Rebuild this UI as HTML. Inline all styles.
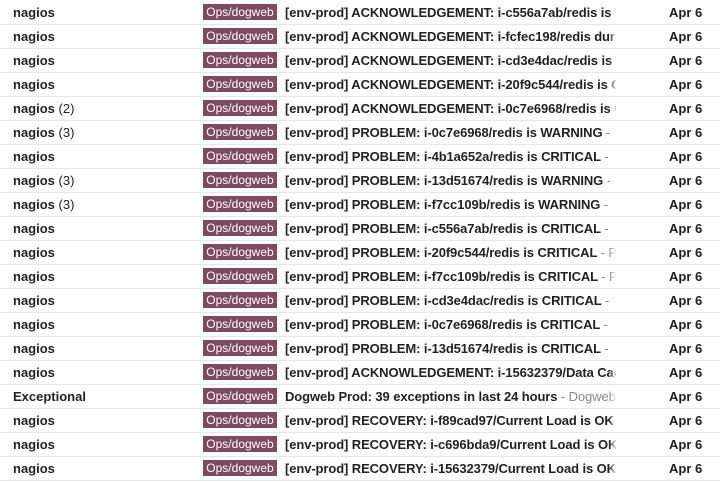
<!DOCTYPE html>
<html><head><meta charset="utf-8"><style>
body{margin:0;width:720px;height:482px;overflow:hidden;background:#fff;font-family:"Liberation Sans",Arial,sans-serif;font-size:13px;color:#222}
.wrap{position:absolute;top:1px;left:0;width:720px}
.row{position:relative;height:23px;border-bottom:1px solid #e6e6e6}
.from{position:absolute;left:13px;top:4px;font-weight:bold}
.from span{font-weight:normal}
.badge{position:absolute;left:203px;top:3px;width:74px;height:16px;background:#7d4a5e;color:#fff;font-size:12px;line-height:17px;text-align:center}
.subj{position:absolute;left:285px;top:4px;width:331px;overflow:hidden;white-space:nowrap;font-weight:bold;letter-spacing:-0.1px}
.subj i{font-style:normal;font-weight:normal;color:#888}
.fade{position:absolute;left:609px;top:0;width:8px;height:23px;background:linear-gradient(to right,rgba(255,255,255,0),#fff)}
.date{position:absolute;left:669px;top:4px;font-weight:bold}
</style></head><body><div class="wrap">
<div class="row"><div class="from">nagios</div><div class="badge">Ops/dogweb</div><div class="subj">[env-prod] ACKNOWLEDGEMENT: i-c556a7ab/redis is WARNING</div><div class="fade"></div><div class="date">Apr 6</div></div>
<div class="row"><div class="from">nagios</div><div class="badge">Ops/dogweb</div><div class="subj">[env-prod] ACKNOWLEDGEMENT: i-fcfec198/redis during</div><div class="fade"></div><div class="date">Apr 6</div></div>
<div class="row"><div class="from">nagios</div><div class="badge">Ops/dogweb</div><div class="subj">[env-prod] ACKNOWLEDGEMENT: i-cd3e4dac/redis is CRITICAL</div><div class="fade"></div><div class="date">Apr 6</div></div>
<div class="row"><div class="from">nagios</div><div class="badge">Ops/dogweb</div><div class="subj">[env-prod] ACKNOWLEDGEMENT: i-20f9c544/redis is CRITICAL</div><div class="fade"></div><div class="date">Apr 6</div></div>
<div class="row"><div class="from">nagios <span>(2)</span></div><div class="badge">Ops/dogweb</div><div class="subj">[env-prod] ACKNOWLEDGEMENT: i-0c7e6968/redis is CRITICAL</div><div class="fade"></div><div class="date">Apr 6</div></div>
<div class="row"><div class="from">nagios <span>(3)</span></div><div class="badge">Ops/dogweb</div><div class="subj">[env-prod] PROBLEM: i-0c7e6968/redis is WARNING <i>- </i></div><div class="fade"></div><div class="date">Apr 6</div></div>
<div class="row"><div class="from">nagios</div><div class="badge">Ops/dogweb</div><div class="subj">[env-prod] PROBLEM: i-4b1a652a/redis is CRITICAL <i>- </i></div><div class="fade"></div><div class="date">Apr 6</div></div>
<div class="row"><div class="from">nagios <span>(3)</span></div><div class="badge">Ops/dogweb</div><div class="subj">[env-prod] PROBLEM: i-13d51674/redis is WARNING <i>- </i></div><div class="fade"></div><div class="date">Apr 6</div></div>
<div class="row"><div class="from">nagios <span>(3)</span></div><div class="badge">Ops/dogweb</div><div class="subj">[env-prod] PROBLEM: i-f7cc109b/redis is WARNING <i>- </i></div><div class="fade"></div><div class="date">Apr 6</div></div>
<div class="row"><div class="from">nagios</div><div class="badge">Ops/dogweb</div><div class="subj">[env-prod] PROBLEM: i-c556a7ab/redis is CRITICAL <i>- </i></div><div class="fade"></div><div class="date">Apr 6</div></div>
<div class="row"><div class="from">nagios</div><div class="badge">Ops/dogweb</div><div class="subj">[env-prod] PROBLEM: i-20f9c544/redis is CRITICAL <i>- P</i></div><div class="fade"></div><div class="date">Apr 6</div></div>
<div class="row"><div class="from">nagios</div><div class="badge">Ops/dogweb</div><div class="subj">[env-prod] PROBLEM: i-f7cc109b/redis is CRITICAL <i>- P</i></div><div class="fade"></div><div class="date">Apr 6</div></div>
<div class="row"><div class="from">nagios</div><div class="badge">Ops/dogweb</div><div class="subj">[env-prod] PROBLEM: i-cd3e4dac/redis is CRITICAL <i>- </i></div><div class="fade"></div><div class="date">Apr 6</div></div>
<div class="row"><div class="from">nagios</div><div class="badge">Ops/dogweb</div><div class="subj">[env-prod] PROBLEM: i-0c7e6968/redis is CRITICAL <i>- </i></div><div class="fade"></div><div class="date">Apr 6</div></div>
<div class="row"><div class="from">nagios</div><div class="badge">Ops/dogweb</div><div class="subj">[env-prod] PROBLEM: i-13d51674/redis is CRITICAL <i>- </i></div><div class="fade"></div><div class="date">Apr 6</div></div>
<div class="row"><div class="from">nagios</div><div class="badge">Ops/dogweb</div><div class="subj">[env-prod] ACKNOWLEDGEMENT: i-15632379/Data Cache</div><div class="fade"></div><div class="date">Apr 6</div></div>
<div class="row"><div class="from">Exceptional</div><div class="badge">Ops/dogweb</div><div class="subj">Dogweb Prod: 39 exceptions in last 24 hours <i>- Dogweb</i></div><div class="fade"></div><div class="date">Apr 6</div></div>
<div class="row"><div class="from">nagios</div><div class="badge">Ops/dogweb</div><div class="subj">[env-prod] RECOVERY: i-f89cad97/Current Load is OK</div><div class="fade"></div><div class="date">Apr 6</div></div>
<div class="row"><div class="from">nagios</div><div class="badge">Ops/dogweb</div><div class="subj">[env-prod] RECOVERY: i-c696bda9/Current Load is OK</div><div class="fade"></div><div class="date">Apr 6</div></div>
<div class="row"><div class="from">nagios</div><div class="badge">Ops/dogweb</div><div class="subj">[env-prod] RECOVERY: i-15632379/Current Load is OK</div><div class="fade"></div><div class="date">Apr 6</div></div>
</div></body></html>
